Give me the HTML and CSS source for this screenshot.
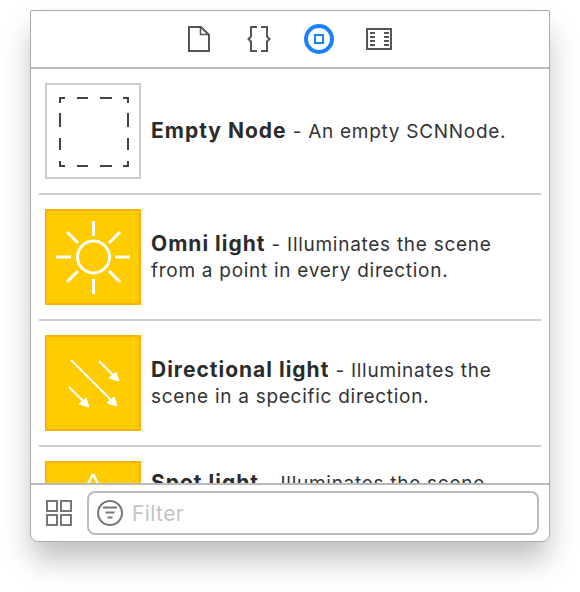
FILE: index.html
```html
<!DOCTYPE html>
<html lang="en">
<head>
    <meta charset="UTF-8">
    <title>Object Library</title>
    <link rel="stylesheet" href="styles.css">
</head>
<body>

    <div class="window">
        <div class="toolbar">
            <svg class="tool" width="24" height="26" viewBox="0 0 24 26" fill="none" stroke="#555" stroke-width="2">
                <path d="M2 1H14L22 9V25H2Z"/>
                <path d="M13.500 1V8.500H22" stroke-width="1.500"/>
            </svg>
            <svg class="tool" width="29" height="26" viewBox="0 0 29 26" fill="none" stroke="#555" stroke-width="2">
                <path d="M14 1H8V10.500L5.500 13L8 15.500V25H14"/>
                <path d="M18 1H24V10.500L26.500 13L24 15.500V25H18"/>
            </svg>
            <svg class="tool" width="30" height="30" viewBox="0 0 30 30" fill="none" stroke="#1a82fb">
                <circle cx="15" cy="15" r="13" stroke-width="4"/>
                <rect x="11" y="11" width="8" height="8" stroke-width="2"/>
            </svg>
            <svg class="tool" width="26" height="22" viewBox="0 0 26 22" fill="none" stroke="#555" stroke-width="2">
                <rect x="1" y="1" width="24" height="20"/>
                <path d="M4 5H9M4 9H9M4 13H9M4 17H9M18 5H23M18 9H23M18 13H23M18 17H23"/>
            </svg>
        </div>

        <div class="list">
            <div class="item">
                <div class="thumb thumb-empty">
                    <svg width="92" height="92" viewBox="0 0 92 92" fill="none" stroke="#444" stroke-width="2">
                        <path d="M13 18V13H18M30 13H41M53 13H65M76 13H81V18"/>
                        <path d="M13 28V42M13 53V65"/>
                        <path d="M81 28V42M81 53V65"/>
                        <path d="M13 76V81H18M30 81H41M53 81H65M76 81H81V76"/>
                    </svg>
                </div>
                <p class="desc"><b>Empty Node</b> - An empty SCNNode.</p>
            </div>

            <div class="item">
                <div class="thumb thumb-light">
                    <svg width="92" height="92" viewBox="0 0 92 92" fill="none" stroke="#fff" stroke-width="3">
                        <circle cx="46.500" cy="46" r="16"/>
                        <path d="M46.500 10V25M46.500 68V83M9 46H24M68 46H83M20 21L31 32M62 60L73 71M73 21L62 32M31 60L20 71"/>
                    </svg>
                </div>
                <p class="desc"><b>Omni light</b> - Illuminates the scene from a point in every direction.</p>
            </div>

            <div class="item">
                <div class="thumb thumb-light">
                    <svg width="92" height="92" viewBox="0 0 92 92" fill="none" stroke="#fff" stroke-width="2">
                        <path d="M24 23L65 64M52 24L67 39M22 50L37 65"/>
                        <path d="M70 69L60 66L67 60Z M72 44L62 41L69 35Z M42 70L32 67L39 61Z" fill="#fff" stroke-width="1"/>
                    </svg>
                </div>
                <p class="desc"><b>Directional light</b> - Illuminates the scene in a specific direction.</p>
            </div>

            <div class="item">
                <div class="thumb thumb-light">
                    <svg width="92" height="92" viewBox="0 0 92 92" fill="none" stroke="#fff" stroke-width="2.500">
                        <path d="M46 11L39 25M46 11L53 25"/>
                    </svg>
                </div>
                <p class="desc"><b>Spot light</b> - Illuminates the scene from a point, in a cone pointing in a specific direction.</p>
            </div>
        </div>

        <div class="footer">
            <svg class="grid-icon" width="26" height="26" viewBox="0 0 26 26" fill="none" stroke="#777" stroke-width="2">
                <rect x="1" y="1" width="10" height="10"/>
                <rect x="15" y="1" width="10" height="10"/>
                <rect x="1" y="15" width="10" height="10"/>
                <rect x="15" y="15" width="10" height="10"/>
            </svg>
            <div class="filter">
                <svg width="26" height="26" viewBox="0 0 26 26" fill="none" stroke="#777" stroke-width="2">
                    <circle cx="13" cy="13" r="12"/>
                    <path d="M6 7.500H20M8.500 12.500H17.500M10.500 17.500H15.500"/>
                </svg>
                <span>Filter</span>
            </div>
        </div>
    </div>

</body>
</html>
```

FILE: styles.css
```css
body {
    font-family: 'Inter', sans-serif;
    background-color: white;
    margin: 0;
    padding: 10px 30px 0;
    height: 592px;
    box-sizing: border-box;
    overflow: hidden;
    color: #333;
}

.window {
    width: 520px;
    height: 532px;
    box-sizing: border-box;
    display: flex;
    flex-direction: column;
    background-color: white;
    border: 1px solid #aaa;
    border-radius: 2px 2px 8px 8px;
    box-shadow: 0 19px 30px -2px rgba(0, 0, 0, 0.26);
}

.toolbar {
    height: 58px;
    flex: none;
    box-sizing: border-box;
    display: flex;
    justify-content: center;
    align-items: center;
    gap: 32px;
    padding-right: 2px;
    border-bottom: 2px solid #b9b9b9;
}

.list {
    flex: 1;
    min-height: 0;
    overflow: hidden;
    padding: 0 8px;
}

.item {
    display: flex;
    align-items: center;
    gap: 10px;
    padding: 14px 6px;
    border-bottom: 2px solid #ccc;
}

.thumb {
    width: 96px;
    height: 96px;
    flex: none;
    box-sizing: border-box;
    border: 2px solid #ccc;
}

.thumb svg {
    display: block;
}

.thumb-light {
    background-color: #ffcc00;
    border-color: #ffb000;
}

.desc {
    margin: 0;
    font-size: 19px;
    line-height: 26px;
    letter-spacing: 0.72px;
    color: #333;
}

.desc b {
    font-size: 21px;
    font-weight: 700;
    letter-spacing: 1px;
    color: #2b2b2b;
}

.footer {
    height: 58px;
    flex: none;
    box-sizing: border-box;
    display: flex;
    align-items: center;
    gap: 15px;
    padding: 0 10px 0 15px;
    border-top: 2px solid #b9b9b9;
}

.grid-icon {
    flex: none;
}

.filter {
    flex: 1;
    height: 44px;
    box-sizing: border-box;
    display: flex;
    align-items: center;
    gap: 9px;
    padding: 0 8px;
    border: 2px solid #bbb;
    border-radius: 8px;
}

.filter span {
    font-size: 21px;
    letter-spacing: 0.4px;
    color: #c4c4c4;
}
```
